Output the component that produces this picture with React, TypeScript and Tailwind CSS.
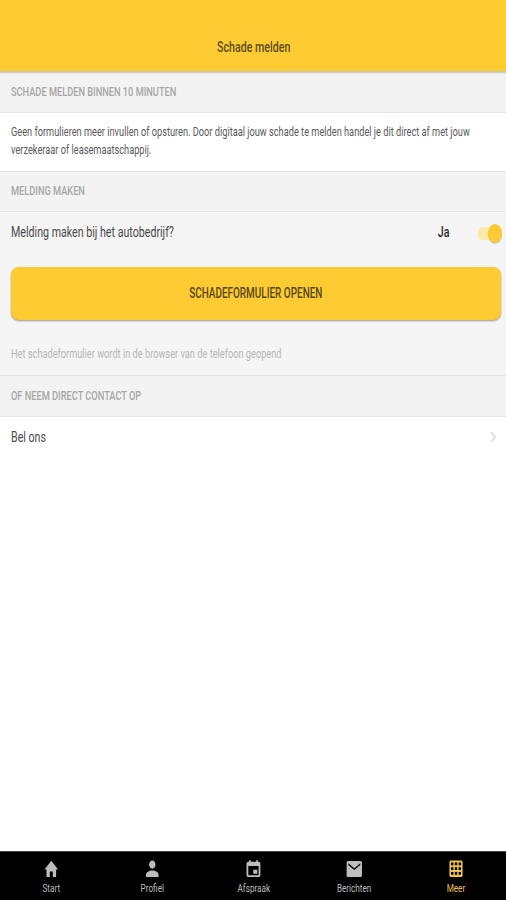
import React from "react";

type SqueezedProps = {
  children: React.ReactNode;
  className?: string;
};

// Condensed label: Roboto narrowed horizontally around its origin
const Squeezed: React.FC<SqueezedProps> = ({ children, className = "" }) => (
  <span
    className={`inline-block scale-x-[0.71] whitespace-nowrap ${className}`}
  >
    {children}
  </span>
);

type SectionHeaderProps = {
  title: string;
  className?: string;
};

const SectionHeader: React.FC<SectionHeaderProps> = ({
  title,
  className = "",
}) => (
  <h2
    className={`flex items-center border-b border-[#e4e4e4] bg-[#f3f3f3] pl-[11px] text-[13px] leading-4 font-medium text-[#a6a6a6] ${className}`}
  >
    <Squeezed className="origin-left">{title}</Squeezed>
  </h2>
);

const tabs = [
  {
    label: "Start",
    icon: <path d="M8.300.8 1.500 9.400h2V17h3.300v-5.500h3V17h3.300V9.400h2z" />,
  },
  {
    label: "Profiel",
    icon: (
      <path d="M8.300.5c1.800 0 3.200 1.800 3.200 4.100s-1.400 4.100-3.200 4.100-3.200-1.800-3.200-4.100S6.500.5 8.300.5zM2 17v-2c0-3 3.200-4.600 6.300-4.600s6.300 1.600 6.300 4.600v2z" />
    ),
  },
  {
    label: "Afspraak",
    icon: (
      <path
        fillRule="evenodd"
        d="M3.500 1.700h.6V.3h1.700v1.400h5.400V.3h1.700v1.400h.5c1.100 0 2 .9 2 2v11.200c0 1.200-.9 2.100-2 2.100H3.500c-1.100 0-2-.9-2-2.100V3.700c0-1.100.9-2 2-2zM3.300 6v9.200h10.300V6zM8.300 9.700h4v4.100h-4z"
      />
    ),
  },
  {
    label: "Berichten",
    icon: (
      <path
        fillRule="evenodd"
        d="M2.300 1h12c1 0 1.700.8 1.700 1.800v12.400c0 1-.7 1.800-1.700 1.800h-12c-1 0-1.700-.8-1.700-1.800V2.800C.6 1.800 1.300 1 2.300 1zM2.300 3.200v1.900l6 5 6-5V3.200l-6 5z"
      />
    ),
  },
  {
    label: "Meer",
    active: true,
    icon: (
      <path
        fillRule="evenodd"
        d="M3.800.5h10.400c.8 0 1.400.7 1.400 1.500v13.500c0 .8-.6 1.500-1.400 1.500H3.800c-.8 0-1.400-.7-1.400-1.500V2c0-.8.6-1.500 1.400-1.500zM4 2.500v2.800h2.400V2.500zm3.800 0v2.800h2.400V2.500zm3.800 0v2.800H14V2.500zM4 7.200V10h2.400V7.200zm3.800 0V10h2.400V7.200zm3.800 0V10H14V7.200zM4 12v2.800h2.400V12zm3.800 0v2.800h2.400V12zm3.800 0v2.800H14V12z"
      />
    ),
  },
];

const TabBar: React.FC = () => (
  <nav className="grid h-[49px] grid-cols-5 border-t border-[#4a4a4a] bg-black">
    {tabs.map((tab) => (
      <button
        key={tab.label}
        className={`flex flex-col items-center pt-2 ${
          tab.active ? "text-[#edc14a]" : "text-[#bdbdbd]"
        }`}
      >
        <svg
          aria-hidden="true"
          viewBox="0 0 16 18"
          className="h-[18px] w-4 fill-current"
        >
          {tab.icon}
        </svg>
        <Squeezed className="mt-[2px] pl-px text-[11.5px] leading-4">
          {tab.label}
        </Squeezed>
      </button>
    ))}
  </nav>
);

export default function App() {
  return (
    <div className="flex h-[900px] w-[506px] flex-col overflow-hidden bg-white font-['Roboto',sans-serif] text-[#4a4a4a]">
      <header className="z-10 flex h-[72px] shrink-0 justify-center border-b border-[#d0c49c] bg-[#ffcb32] pt-[37px] shadow-[0_1px_1px_rgba(0,0,0,0.16)]">
        <h1 className="pl-px text-[15px] leading-5 font-medium text-[#5a4e28]">
          <Squeezed>Schade melden</Squeezed>
        </h1>
      </header>

      <main className="flex-1">
        <SectionHeader
          title="SCHADE MELDEN BINNEN 10 MINUTEN"
          className="h-[41px] pb-px"
        />
        <p className="h-[58px] w-[350px] pt-[10px] pl-[11px] text-[13px] leading-[18px] text-[#5a5a5a]">
          <Squeezed className="origin-left">
            Geen formulieren meer invullen of opsturen. Door digitaal jouw
            schade te melden handel je dit direct af met jouw
            <br />
            verzekeraar of leasemaatschappij.
          </Squeezed>
        </p>
        <SectionHeader
          title="MELDING MAKEN"
          className="h-[41px] border-t pb-px"
        />

        <section className="h-[163px] bg-[#f5f5f5] pr-1 pl-[11px]">
          <div className="flex h-[42px] items-center text-[15px] leading-5">
            <Squeezed className="mb-[3px] origin-left">
              Melding maken bij het autobedrijf?
            </Squeezed>
            <Squeezed className="mr-[29px] mb-[3px] ml-auto origin-right font-medium text-[#2a2a2a]">
              Ja
            </Squeezed>
            <span
              role="switch"
              aria-checked="true"
              className="flex h-[13px] w-6 items-center justify-end rounded-[5px] bg-[#ffe9ab]"
            >
              <span className="h-[19px] w-[14px] shrink-0 rounded-[50%] bg-[#fbca35] shadow-[0_1px_1px_rgba(0,0,0,0.2)]" />
            </span>
          </div>
          <button className="mt-[13px] flex h-[53px] w-[490px] items-center justify-center rounded-[8px] bg-[#ffcb32] text-[14px] font-medium text-[#54461d] shadow-[0_1px_2px_rgba(0,0,0,0.4)]">
            <Squeezed>SCHADEFORMULIER OPENEN</Squeezed>
          </button>
          <p className="mt-[26px] text-[13px] leading-4 text-[#b5b5b5]">
            <Squeezed className="origin-left">
              Het schadeformulier wordt in de browser van de telefoon geopend
            </Squeezed>
          </p>
        </section>

        <SectionHeader
          title="OF NEEM DIRECT CONTACT OP"
          className="h-[42px] border-t"
        />
        <button className="flex h-10 w-full items-center pr-[10px] pl-[11px] text-[15px] leading-5">
          <Squeezed className="origin-left">Bel ons</Squeezed>
          <svg
            aria-hidden="true"
            viewBox="0 0 6 12"
            className="ml-auto h-3 w-[6px] fill-none stroke-[#dcdcdc] stroke-[1.5]"
          >
            <path d="m.7.700 4.500 5.300-4.500 5.300" />
          </svg>
        </button>
      </main>

      <TabBar />
    </div>
  );
}
